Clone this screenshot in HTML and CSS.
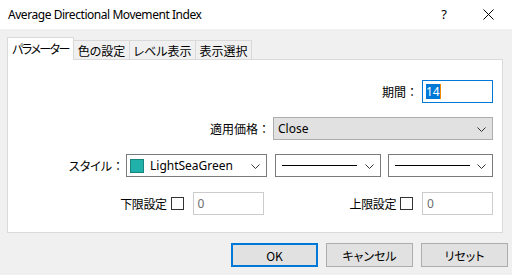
FILE: index.html
```html
<!DOCTYPE html>
<html lang="ja">
<head>
<meta charset="utf-8">
<link rel="stylesheet" href="styles.css">
</head>
<body>
<div class="window">
  <div class="titlebar">
    <span class="title">Average Directional Movement Index</span>
    <span class="help">?</span>
    <span class="close"><svg width="11" height="11" viewBox="0 0 11 11"><path d="M0.5 0.5 L10.5 10.5 M10.5 0.5 L0.5 10.5" stroke="#000" stroke-width="1" fill="none"/></svg></span>
  </div>
  <div class="content">
    <div class="tabs">
      <div class="tab active">パラメーター</div>
      <div class="tab t2">色の設定</div>
      <div class="tab t3">レベル表示</div>
      <div class="tab t4">表示選択</div>
    </div>
    <div class="panel">
      <div class="row r1">
        <span class="label">期間：</span>
        <div class="input active-input"><span class="sel">14</span><span class="caret"></span></div>
      </div>
      <div class="row r2">
        <span class="label">適用価格：</span>
        <div class="combo grey"><span class="val">Close</span><svg class="arrow" width="9" height="5" viewBox="0 0 9 5"><polyline points="0.5,0.5 4.5,4.5 8.5,0.5" fill="none" stroke="#333" stroke-width="1"/></svg></div>
      </div>
      <div class="row r3">
        <span class="label"><span class="kana">スタイル</span>：</span>
        <div class="combo white c1"><span class="swatch"></span><span class="val">LightSeaGreen</span><svg class="arrow" width="9" height="5" viewBox="0 0 9 5"><polyline points="0.5,0.5 4.5,4.5 8.5,0.5" fill="none" stroke="#333" stroke-width="1"/></svg></div>
        <div class="combo white c2"><span class="line"></span><svg class="arrow" width="9" height="5" viewBox="0 0 9 5"><polyline points="0.5,0.5 4.5,4.5 8.5,0.5" fill="none" stroke="#333" stroke-width="1"/></svg></div>
        <div class="combo white c3"><span class="line"></span><svg class="arrow" width="9" height="5" viewBox="0 0 9 5"><polyline points="0.5,0.5 4.5,4.5 8.5,0.5" fill="none" stroke="#333" stroke-width="1"/></svg></div>
      </div>
      <div class="row r4">
        <div class="group g1">
          <span class="label">下限設定</span>
          <span class="check"></span>
          <div class="input disabled">0</div>
        </div>
        <div class="group g2">
          <span class="label">上限設定</span>
          <span class="check"></span>
          <div class="input disabled">0</div>
        </div>
      </div>
    </div>
    <div class="buttons">
      <div class="btn default">OK</div>
      <div class="btn">キャンセル</div>
      <div class="btn">リセット</div>
    </div>
  </div>
</div>
</body>
</html>
```

FILE: styles.css
```css
* { box-sizing: border-box; }
html, body {
  margin: 0;
  padding: 0;
  width: 512px;
  height: 275px;
  overflow: hidden;
  background: #f0f0f0;
  font-family: "Noto Sans", "Noto Sans CJK JP", sans-serif;
  font-size: 12px;
  color: #000;
}
.tab, .label, .btn {
  font-family: "Noto Sans CJK JP", "Noto Sans", sans-serif;
}
.tab, .btn, .kana {
  font-feature-settings: "palt";
}
.window {
  width: 512px;
  height: 275px;
  display: flex;
  flex-direction: column;
}
.titlebar {
  height: 29px;
  background: #fff;
  display: flex;
  align-items: center;
  padding-left: 8px;
}
.title {
  font-size: 12px;
  letter-spacing: -0.45px;
  margin-top: -1px;
}
.help {
  margin-left: auto;
  font-size: 13px;
  margin-right: 36px;
  margin-top: -1px;
}
.close {
  display: flex;
  margin-right: 18px;
  margin-top: -1px;
}
.content {
  padding: 0 7px 0 7px;
  display: flex;
  flex-direction: column;
}
.tabs {
  margin-top: 8px;
  height: 22px;
  display: flex;
  align-items: flex-end;
}
.tab {
  height: 19px;
  border-top: 1px solid #d9d9d9;
  border-right: 1px solid #d9d9d9;
  background: #f0f0f0;
  display: flex;
  align-items: center;
  justify-content: center;
  font-size: 12px;
  padding-top: 1px;
  position: relative;
  white-space: nowrap;
}
.tab.active {
  height: 23px;
  width: 67px;
  margin-bottom: -1px;
  border-left: 1px solid #d9d9d9;
  background: #fff;
  z-index: 1;
  align-items: flex-start;
  padding-top: 2px;
  letter-spacing: -1.5px;
}
.t2 { width: 56px; }
.t3 { width: 66px; }
.t4 { width: 56px; }
.panel {
  width: 496px;
  height: 174px;
  background: #fff;
  border: 1px solid #d9d9d9;
  padding: 20px 9px 0 0;
  display: flex;
  flex-direction: column;
}
.row {
  height: 23px;
  display: flex;
  align-items: center;
  justify-content: flex-end;
}
.r2, .r3 { margin-top: 14px; }
.r4 { margin-top: 15px; }
.label {
  font-size: 12px;
  white-space: nowrap;
}
.r1 .label { margin-right: 4px; }
.r2 .label { margin-right: 3px; }
.r3 .label { margin-right: 2px; }
.input {
  width: 71px;
  height: 23px;
  background: #fff;
  display: flex;
  align-items: center;
}
.active-input {
  border: 1px solid #0078d7;
  padding-left: 3px;
}
.sel {
  background: #0078d7;
  color: #fff;
  height: 15px;
  line-height: 15px;
  font-size: 12px;
}
.caret {
  width: 1px;
  height: 15px;
  background: #f08a00;
}
.combo {
  height: 23px;
  display: flex;
  align-items: center;
  position: relative;
}
.combo .arrow {
  position: absolute;
  right: 6px;
  top: 9px;
}
.grey {
  width: 220px;
  background: #e1e1e1;
  border: 1px solid #adadad;
  padding-left: 4px;
}
.white {
  background: #fff;
  border: 1px solid #7a7a7a;
}
.c1 { width: 141px; padding-left: 3px; }
.c2 { width: 106px; margin-left: 8px; padding-left: 6px; }
.c3 { width: 105px; margin-left: 7px; padding-left: 6px; }
.swatch {
  width: 14px;
  height: 14px;
  background: #20b2aa;
  border: 1px solid #17847e;
  margin-right: 6px;
}
.val {
  font-size: 12px;
  white-space: nowrap;
}
.line {
  width: 75px;
  height: 1px;
  background: #000;
}
.group {
  display: flex;
  align-items: center;
}
.g1 { margin-right: 86px; }
.group .label { letter-spacing: -0.4px; }
.check {
  width: 13px;
  height: 13px;
  border: 1px solid #333;
  margin-left: 4px;
  margin-right: 9px;
  background: #fff;
}
.disabled {
  border: 1px solid #cccccc;
  color: #6d6d6d;
  padding-left: 4px;
  align-items: flex-start;
  padding-top: 2px;
}
.buttons {
  margin-top: 10px;
  display: flex;
  justify-content: flex-end;
  gap: 8px;
  margin-right: -3px;
}
.btn {
  width: 87px;
  height: 24px;
  background: #e1e1e1;
  border: 1px solid #adadad;
  display: flex;
  align-items: center;
  justify-content: center;
  font-size: 12px;
}
.btn.default {
  border: 2px solid #0078d7;
}
```
